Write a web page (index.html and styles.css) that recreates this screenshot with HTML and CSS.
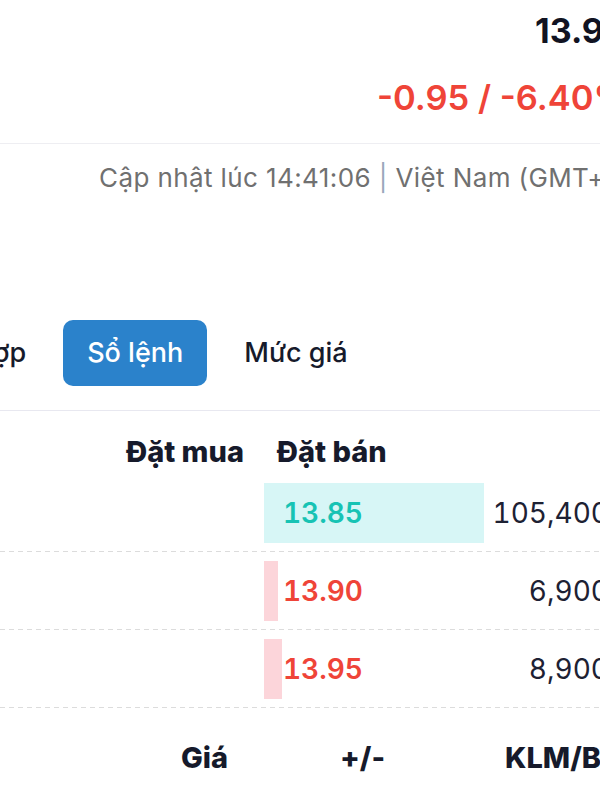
FILE: index.html
```html
<!DOCTYPE html>
<html lang="vi">
<head>
    <meta charset="UTF-8">
    <meta name="viewport" content="width=device-width, initial-scale=1.0">
    <title>Sổ lệnh</title>
    <link rel="stylesheet" href="styles.css">
</head>
<body>
    <div class="quote">
        <div class="price">13.90</div>
        <div class="change">-0.95 / -6.40%</div>
    </div>

    <div class="updated">Cập nhật lúc 14:41:06 <span class="sep">|</span> Việt Nam (GMT+7)</div>

    <div class="tabs">
        <button class="tab">Tổng hợp</button>
        <button class="tab active">Sổ lệnh</button>
        <button class="tab">Mức giá</button>
    </div>

    <div class="book">
        <div class="book-head">
            <div class="bid-title">Đặt mua</div>
            <div class="ask-title">Đặt bán</div>
        </div>

        <div class="book-row">
            <div class="bid"></div>
            <div class="ask-price match">
                <span class="bar" style="width: 100%"></span>
                <span class="num">13.85</span>
            </div>
            <div class="ask-vol">105,400</div>
        </div>
        <div class="book-row">
            <div class="bid"></div>
            <div class="ask-price">
                <span class="bar" style="width: 14px"></span>
                <span class="num">13.90</span>
            </div>
            <div class="ask-vol">6,900</div>
        </div>
        <div class="book-row">
            <div class="bid"></div>
            <div class="ask-price">
                <span class="bar" style="width: 18px"></span>
                <span class="num">13.95</span>
            </div>
            <div class="ask-vol">8,900</div>
        </div>
    </div>

    <div class="trades-head">
        <div class="col-price">Giá</div>
        <div class="col-change">+/-</div>
        <div class="col-vol">KLM/B</div>
    </div>
</body>
</html>
```

FILE: styles.css
```css
body {
    font-family: 'Inter', 'Noto Sans', sans-serif;
    margin: 0;
    width: 600px;
    height: 800px;
    overflow: hidden;
    background-color: #fff;
    color: #161a2b;
}

.quote {
    padding: 7px 0 21px;
    border-bottom: 1px solid #eeeef2;
    white-space: nowrap;
}

.price {
    padding-left: 535px;
    font-size: 34px;
    line-height: 48px;
    font-weight: 700;
    color: #111322;
}

.change {
    margin-top: 19px;
    padding-left: 377px;
    font-size: 34.5px;
    line-height: 48px;
    font-weight: 600;
    color: #ef4438;
}

.updated {
    padding: 16px 0 0 99px;
    font-size: 26px;
    line-height: 36px;
    letter-spacing: 0.4px;
    color: #707070;
    white-space: nowrap;
}

.sep {
    color: #9aa6bb;
}

.tabs {
    display: flex;
    gap: 13px;
    margin: 124px 0 0 -119px;
    padding-bottom: 24px;
    border-bottom: 1px solid #e8e8f0;
    width: 719px;
}

.tab {
    font-family: inherit;
    font-size: 27px;
    line-height: 40px;
    font-weight: 500;
    padding: 13px 24px;
    border: none;
    border-radius: 10px;
    background: none;
    color: #161a2b;
    white-space: nowrap;
}

.tab.active {
    background-color: #2b82cb;
    color: #fff;
}

.book {
    width: 609px;
    padding-top: 21px;
}

.book-head,
.book-row {
    display: grid;
    grid-template-columns: 264px 220px 1fr;
}

.book-head {
    font-size: 29px;
    line-height: 40px;
    font-weight: 800;
    margin-bottom: 2px;
}

.bid-title {
    text-align: right;
    padding-right: 20px;
}

.ask-title {
    padding-left: 13px;
    white-space: nowrap;
}

.book-row {
    padding: 9px 0;
    font-size: 28px;
    line-height: 60px;
    font-variant-numeric: tabular-nums;
    background: repeating-linear-gradient(to right, #dcdcdc 0 5px, transparent 5px 9px) left bottom / 100% 1px no-repeat;
}

.ask-price {
    position: relative;
    padding-left: 19px;
    font-weight: 600;
    color: #ef4438;
}

.ask-price.match {
    color: #17c3b4;
}

.bar {
    position: absolute;
    left: 0;
    top: 0;
    bottom: 0;
    background-color: #fcd5da;
}

.match .bar {
    background-color: #d7f6f6;
}

.num {
    position: relative;
}

.ask-vol {
    text-align: right;
    color: #1d2133;
}

.trades-head {
    display: grid;
    grid-template-columns: 240px 245px 1fr;
    margin-top: 30px;
    font-size: 29px;
    line-height: 40px;
    font-weight: 800;
    white-space: nowrap;
}

.col-price {
    text-align: right;
    padding-right: 12px;
}

.col-change {
    text-align: center;
}

.col-vol {
    padding-left: 20px;
}
```
